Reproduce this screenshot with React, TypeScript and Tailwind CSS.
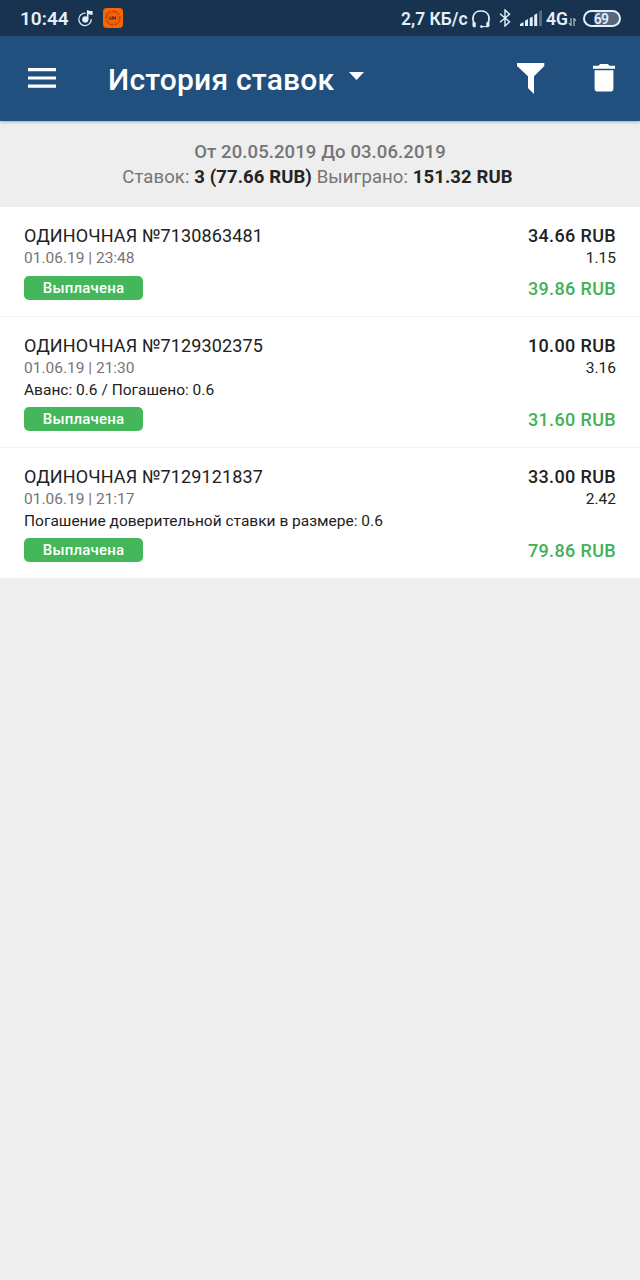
import React from 'react';

interface Bet {
  id: string;
  date: string;
  note?: string;
  stake: string;
  odds: string;
  payout: string;
}

const bets: Bet[] = [
  { id: '7130863481', date: '01.06.19 | 23:48', stake: '34.66 RUB', odds: '1.15', payout: '39.86 RUB' },
  {
    id: '7129302375',
    date: '01.06.19 | 21:30',
    note: 'Аванс: 0.6 / Погашено: 0.6',
    stake: '10.00 RUB',
    odds: '3.16',
    payout: '31.60 RUB',
  },
  {
    id: '7129121837',
    date: '01.06.19 | 21:17',
    note: 'Погашение доверительной ставки в размере: 0.6',
    stake: '33.00 RUB',
    odds: '2.42',
    payout: '79.86 RUB',
  },
];

const StatusBar: React.FC = () => (
  <div className="flex h-9 items-center justify-between bg-[#17334f] pl-5 pr-[19px] text-[#e3effc]">
    <div className="flex items-center">
      <span className="w-[58px] pt-0.5 text-[19px] font-semibold leading-9">10:44</span>
      <svg className="h-[18px] w-[17px]" viewBox="0 0 17 18" fill="none">
        <path d="M7.5 4.2A6.2 6.2 0 1 0 13.2 10" stroke="currentColor" strokeWidth="1.2" />
        <circle cx="7.3" cy="10.4" r="3.1" fill="currentColor" />
        <path d="M8.9 10.5V1l1.5.6c1.2.7 2.6.4 4.3.6v3.6c-1.8.2-3-.3-4.2-.9v5.6z" fill="currentColor" />
      </svg>
      <svg className="ml-2 h-5 w-5" viewBox="0 0 20 20" fill="none">
        <rect width="20" height="20" rx="4" fill="#fb6500" />
        <circle cx="10" cy="10" r="7" stroke="#8b3a10" strokeWidth="1" strokeDasharray="9 1.5" />
        <circle cx="10" cy="10" r="5.2" stroke="#c74f08" strokeWidth=".7" />
        <path d="M7 8.5v3M7 11h1.5M9.2 8.5v3M9.2 9h2v2h-2M12.5 8.5v3" stroke="#4b2a17" strokeWidth="1" />
      </svg>
    </div>
    <div className="flex items-center">
      <span className="w-[70px] pt-px text-[17.5px] font-semibold leading-9">2,7 КБ/с</span>
      <svg className="mt-px h-5 w-5" viewBox="0 0 20 20" fill="none">
        <path d="M3.6 15.5C.8 11 .8 2 10 2s9.2 9 6.4 13.5" stroke="currentColor" strokeWidth="1.6" />
        <path d="M1.5 13.5h3.2v4.7H3.2c-1 0-1.7-.8-1.7-1.7zM15.3 13.5h3.2v3c0 1-.7 1.7-1.7 1.7h-1.5z" fill="currentColor" />
        <path d="M16 17.6h-5" stroke="currentColor" strokeWidth="1" />
        <circle cx="10.5" cy="17.6" r="1.4" fill="currentColor" />
      </svg>
      <svg className="ml-2 h-[18px] w-3" viewBox="0 0 12 18" fill="none">
        <path d="M1 4.7l9.5 8.1L6 17V1l4.5 4.2L1 13.3" stroke="currentColor" strokeWidth="1.4" />
      </svg>
      <svg className="ml-[9px] h-4 w-[23px]" viewBox="0 0 23 16" fill="currentColor">
        <path d="M0 16v-2l3.5-2v4zM5 16v-5.3l3-1.7v7zM9.7 16V8l3-1.5V16zM14.2 16V5l3-1.7V16z" />
        <path d="M19 16V1.5L22 0v16z" opacity=".3" />
      </svg>
      <span className="ml-[3px] pt-px text-[17.5px] font-semibold leading-9">4G</span>
      <svg className="mt-2 h-2 w-[9px] opacity-80" viewBox="0 0 9 8" stroke="currentColor" strokeWidth="1.1" fill="none">
        <path d="M3 0v7.5L1 5M6 8V.5L8 3" />
      </svg>
      <div className="ml-1.5 flex h-[17px] w-[38px] items-center justify-center rounded-full border-2 border-current bg-linear-to-r from-[#17334f] from-25% to-[#53677e] to-35% pr-0.5 pt-px text-[14px] font-semibold leading-none tracking-[-0.8px]">
        69
      </div>
    </div>
  </div>
);

const Toolbar: React.FC = () => (
  <header className="z-10 flex h-[85px] items-center bg-[#21507f] px-7 text-white shadow-[0_1px_3px_rgba(40,60,110,0.4)]">
    <svg className="-mt-px h-5 w-7" viewBox="0 0 28 20" fill="currentColor">
      <path d="M0 0h28v3.2H0zM0 8.4h28v3.2H0zM0 16.6h28v3.2H0z" />
    </svg>
    <h1 className="ml-[52px] whitespace-nowrap pt-[3px] text-[30px] font-medium leading-none tracking-[0.2px]">
      История ставок
    </h1>
    <svg className="-mt-[5px] ml-[15px] h-2 w-[15px]" viewBox="0 0 15 8" fill="currentColor">
      <path d="M0 0h15L7.5 8z" />
    </svg>
    <svg className="ml-auto h-[31px] w-7" viewBox="0 0 28 31" fill="currentColor">
      <path d="M0 0h27.3v3L17 13.3V31L11 25V13.3L0 3z" />
    </svg>
    <svg className="-mr-[3px] -mt-px ml-12 h-7 w-[22px]" viewBox="0 0 22 28" fill="currentColor">
      <path d="M0 1.7h5.5L7.2 0h7.6l1.7 1.7H22v3.1H0zM1.6 6.3h18.8v18.2a3.1 3.1 0 0 1-3.1 3.1H4.7a3.1 3.1 0 0 1-3.1-3.1z" />
    </svg>
  </header>
);

const Summary: React.FC = () => (
  <div className="h-[86px] pt-[19px] text-center text-[18.5px] leading-[25px] tracking-[0.1px] text-[#757575]">
    <p className="font-medium">От 20.05.2019 До 03.06.2019</p>
    <p className="-ml-[5px]">
      Ставок: <b className="font-bold text-[#242424]">3 (77.66 RUB)</b> Выиграно:{' '}
      <b className="font-bold text-[#242424]">151.32 RUB</b>
    </p>
  </div>
);

const BetRow: React.FC<{ bet: Bet }> = ({ bet }) => (
  <li className="border-b border-[#f3f3f3] bg-white px-6 pb-4 pt-[15px] text-[15.5px] text-[#212121] last:border-b-0">
    <div className="flex h-[26px] items-center justify-between text-[18px]">
      <span className="tracking-[0.12px]">ОДИНОЧНАЯ №{bet.id}</span>
      <span className="font-medium tracking-[0.36px]">{bet.stake}</span>
    </div>
    <div className="flex h-[21px] items-center justify-between">
      <span className="text-[#757575]">{bet.date}</span>
      <span>{bet.odds}</span>
    </div>
    {bet.note && <p className="h-[21px] leading-[23px]">{bet.note}</p>}
    <div className="mt-[7px] flex h-6 items-center justify-between">
      <span className="h-6 w-[119px] rounded-[5px] bg-[#43b759] text-center text-[15px] font-medium leading-6 tracking-[0.2px] text-white">
        Выплачена
      </span>
      <span className="text-[18px] font-medium tracking-[0.36px] text-[#43b055]">{bet.payout}</span>
    </div>
  </li>
);

const App: React.FC = () => {
  return (
    <div className="flex min-h-screen w-full flex-col bg-[#eeeeee] font-['Roboto',sans-serif]">
      <StatusBar />
      <Toolbar />
      <Summary />
      <ul>
        {bets.map((bet) => (
          <BetRow key={bet.id} bet={bet} />
        ))}
      </ul>
    </div>
  );
};

export default App;
